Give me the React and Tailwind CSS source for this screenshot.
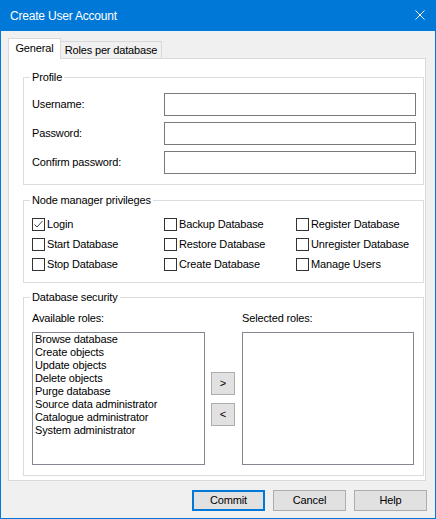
import React from "react";

const font = "font-['Liberation_Sans',Arial,sans-serif]";

function Checkbox({ label, checked }) {
  return (
    <div className="flex items-center h-[20px] gap-[2px]">
      <div className="w-[13px] h-[13px] border border-[#333333] bg-white flex items-center justify-center">
        {checked && (
          <svg width="11" height="11" viewBox="0 0 11 11">
            <polyline points="1.5,5.5 4,8 9.5,2" fill="none" stroke="#444" strokeWidth="1" />
          </svg>
        )}
      </div>
      <span className="leading-[13px]">{label}</span>
    </div>
  );
}

function Group({ title, className, children }) {
  return (
    <fieldset className={`w-[401px] border border-[#dcdcdc] pl-[8px] ${className}`}>
      <legend className="-ml-[2px] px-[2px] leading-[13px]">{title}</legend>
      {children}
    </fieldset>
  );
}

function Field({ label }) {
  return (
    <div className="grid grid-cols-[132px_252px] items-center h-[23px]">
      <span className="leading-[13px]">{label}</span>
      <div className="h-[23px] border border-[#7a7a7a] bg-white" />
    </div>
  );
}

const roles = [
  "Browse database",
  "Create objects",
  "Update objects",
  "Delete objects",
  "Purge database",
  "Source data administrator",
  "Catalogue administrator",
  "System administrator",
];

export default function App() {
  return (
    <div className={`w-[436px] h-[519px] flex flex-col border-x border-b border-[#0078d7] bg-[#f0f0f0] text-[11px] tracking-[-0.15px] text-black ${font}`}>
      {/* Title bar */}
      <div className="h-[31px] shrink-0 bg-[#0078d7] flex items-center justify-between pl-[9px] pr-[10px] text-white">
        <span className="text-[12px] tracking-[-0.2px]">Create User Account</span>
        <svg width="10" height="10" viewBox="0 0 10 10" className="mt-[-1px]">
          <path d="M0.5 0.5 L9.5 9.5 M9.5 0.5 L0.5 9.5" stroke="white" strokeWidth="1" />
        </svg>
      </div>

      {/* Body */}
      <div className="flex-1 flex flex-col pt-[7px] pl-[7px] pr-[8px]">
        {/* Tabs */}
        <div className="h-[20px] flex items-end">
          <div className="relative z-10 -mb-px h-[21px] w-[53px] bg-white border-x border-t border-[#d9d9d9] flex justify-center pt-[3px] leading-[13px]">
            General
          </div>
          <div className="h-[17px] w-[101px] bg-[#f0f0f0] border-r border-t border-[#d9d9d9] flex justify-center pt-[2px] leading-[13px]">
            Roles per database
          </div>
        </div>

        {/* Panel */}
        <div className="h-[423px] mr-[1px] border border-[#d9d9d9] bg-white pt-[12px] pl-[14px] flex flex-col">
          <Group title="Profile" className="pt-[9px] pb-[10px]">
            <div className="flex flex-col gap-[6px]">
              <Field label="Username:" />
              <Field label="Password:" />
              <Field label="Confirm password:" />
            </div>
          </Group>

          <Group title="Node manager privileges" className="mt-[9px] pt-[7px] pb-[8px]">
            <div className="grid grid-cols-[132px_132px_auto]">
              <Checkbox label="Login" checked />
              <Checkbox label="Backup Database" />
              <Checkbox label="Register Database" />
              <Checkbox label="Start Database" />
              <Checkbox label="Restore Database" />
              <Checkbox label="Unregister Database" />
              <Checkbox label="Stop Database" />
              <Checkbox label="Create Database" />
              <Checkbox label="Manage Users" />
            </div>
          </Group>

          <Group title="Database security" className="mt-[8px] pt-[8px] pb-[10px]">
            <div className="flex items-end">
              <div className="flex flex-col w-[173px]">
                <span className="leading-[13px]">Available roles:</span>
                <div className="mt-[7px] h-[133px] border border-[#828790] bg-white pl-[2px] flex flex-col">
                  {roles.map((r) => (
                    <span key={r} className="leading-[13px]">{r}</span>
                  ))}
                </div>
              </div>
              <div className="ml-[6px] w-[24px] h-[133px] flex flex-col justify-center gap-[8px]">
                <button className="h-[23px] w-[24px] bg-[#e1e1e1] border border-[#adadad] flex items-center justify-center leading-[13px]">&gt;</button>
                <button className="h-[23px] w-[24px] bg-[#e1e1e1] border border-[#adadad] flex items-center justify-center leading-[13px]">&lt;</button>
              </div>
              <div className="ml-[7px] flex flex-col w-[172px]">
                <span className="leading-[13px]">Selected roles:</span>
                <div className="mt-[7px] h-[133px] border border-[#828790] bg-white" />
              </div>
            </div>
          </Group>
        </div>

        {/* Dialog buttons */}
        <div className="mt-[9px] flex justify-end gap-[8px]">
          <button className="w-[73px] h-[21px] bg-[#e1e1e1] border-2 border-[#0078d7] flex items-center justify-center leading-[13px]">Commit</button>
          <button className="w-[73px] h-[21px] bg-[#e1e1e1] border border-[#adadad] flex items-center justify-center leading-[13px]">Cancel</button>
          <button className="w-[73px] h-[21px] bg-[#e1e1e1] border border-[#adadad] flex items-center justify-center leading-[13px]">Help</button>
        </div>
      </div>
    </div>
  );
}
